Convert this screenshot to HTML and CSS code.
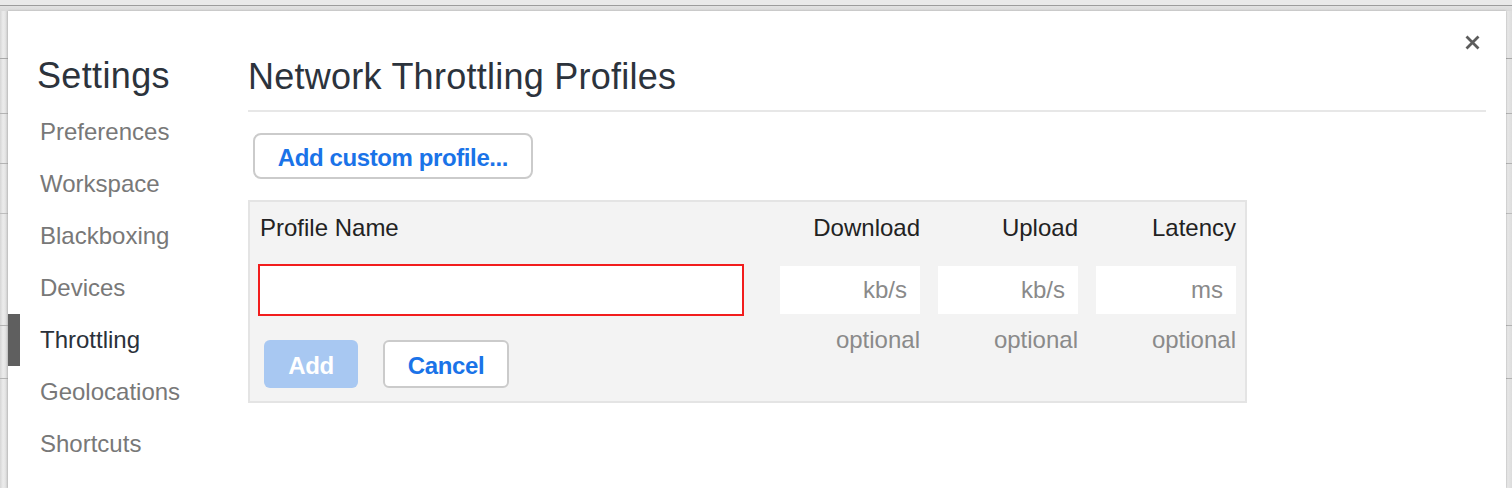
FILE: index.html
```html
<!DOCTYPE html>
<html lang="en">
<head>
<meta charset="utf-8">
<title>Settings - Throttling</title>
<link rel="stylesheet" href="styles.css">
</head>
<body>
<div class="dialog">
  <button class="close" aria-label="Close">
    <svg width="15" height="15" viewBox="0 0 15 15"><path d="M1.5 1.5 L13.5 13.5 M13.5 1.5 L1.5 13.5" stroke="#5c5c5c" stroke-width="2.8" stroke-linecap="butt" fill="none"/></svg>
  </button>
  <nav class="sidebar">
    <h1 class="sidebar-title">Settings</h1>
    <ul class="tabs">
      <li class="tab">Preferences</li>
      <li class="tab">Workspace</li>
      <li class="tab">Blackboxing</li>
      <li class="tab">Devices</li>
      <li class="tab selected">Throttling</li>
      <li class="tab">Geolocations</li>
      <li class="tab">Shortcuts</li>
    </ul>
  </nav>
  <main class="content">
    <h2 class="content-title">Network Throttling Profiles</h2>
    <button class="btn add-profile">Add custom profile...</button>
    <div class="editor">
      <div class="editor-grid">
        <div class="hdr hdr-left">Profile Name</div>
        <div class="hdr">Download</div>
        <div class="hdr">Upload</div>
        <div class="hdr">Latency</div>

        <div class="input-cell"><input class="name-input" type="text"></div>
        <div class="input-cell"><input class="num-input" type="text" placeholder="kb/s"></div>
        <div class="input-cell"><input class="num-input" type="text" placeholder="kb/s"></div>
        <div class="input-cell"><input class="num-input" type="text" placeholder="ms"></div>

        <div class="actions">
          <button class="btn btn-primary">Add</button>
          <button class="btn btn-cancel">Cancel</button>
        </div>
        <div class="hint">optional</div>
        <div class="hint">optional</div>
        <div class="hint">optional</div>
      </div>
    </div>
  </main>
</div>
</body>
</html>
```

FILE: styles.css
```css
html, body {
  margin: 0;
  padding: 0;
  height: 100%;
  overflow: hidden;
}

body {
  font-family: "Liberation Sans", Arial, sans-serif;
  background:
    linear-gradient(#a9a9a9, #a9a9a9) 0 58px / 100% 1px no-repeat,
    linear-gradient(#b3b3b3, #b3b3b3) 0 113px / 100% 1px no-repeat,
    linear-gradient(#b3b3b3, #b3b3b3) 0 163px / 100% 1px no-repeat,
    linear-gradient(#bdbdbd, #bdbdbd) 0 213px / 100% 1px no-repeat,
    linear-gradient(#b3b3b3, #b3b3b3) 0 325px / 100% 1px no-repeat,
    linear-gradient(#b3b3b3, #b3b3b3) 0 378px / 100% 1px no-repeat,
    linear-gradient(#e9e9e9 0, #e9e9e9 5px, #9c9c9c 5px, #9c9c9c 6px, #e2e2e2 6px, #d9d9d9 11px, transparent 11px),
    linear-gradient(90deg, #d6d6d6 0, #ececec 3px, #e6e6e6 5px, #cfcfcf 8px, #cfcfcf 1505px, #e8e8e8 1507px, #dcdcdc 1512px);
  padding-top: 11px;
  box-sizing: border-box;
}

.dialog {
  position: relative;
  margin-left: 8px;
  width: 1498px;
  height: 477px;
  background: #fff;
  box-shadow: 0 0 2px rgba(0, 0, 0, 0.22);
  display: flex;
}

.close {
  position: absolute;
  top: 24px;
  right: 26px;
  width: 15px;
  height: 15px;
  padding: 0;
  border: 0;
  background: transparent;
  display: flex;
}

/* Sidebar */
.sidebar {
  width: 240px;
  flex: none;
  padding-top: 45px;
  box-sizing: border-box;
}

.sidebar-title {
  margin: 0 0 10px 0;
  padding-left: 29px;
  font-size: 36px;
  line-height: 40px;
  font-weight: normal;
  letter-spacing: 0.35px;
  color: #2c333c;
}

.tabs {
  list-style: none;
  margin: 0;
  padding: 0;
}

.tab {
  height: 52px;
  line-height: 52px;
  font-size: 24px;
  padding-left: 32px;
  color: #787878;
  box-sizing: border-box;
}

.tab.selected {
  border-left: 12px solid #5f5f5f;
  padding-left: 20px;
  color: #2a313a;
}

/* Content */
.content {
  flex: 1;
  padding: 45px 20px 0 0;
  box-sizing: border-box;
}

.content-title {
  margin: 0;
  font-size: 36px;
  line-height: 42px;
  font-weight: normal;
  letter-spacing: 0.25px;
  color: #2c333c;
  padding-bottom: 12px;
  border-bottom: 2px solid #e7e7e7;
}

.btn {
  font-family: "Liberation Sans", Arial, sans-serif;
  font-size: 24px;
  font-weight: bold;
  letter-spacing: -0.4px;
  box-sizing: border-box;
  cursor: pointer;
  padding: 3px 0 0 0;
}

.add-profile {
  display: block;
  margin: 21px 0 0 5px;
  width: 280px;
  height: 46px;
  border: 2px solid #cbcbcb;
  border-radius: 8px;
  background: #fff;
  color: #1a73e8;
}

.editor {
  margin-top: 21px;
  width: 999px;
  box-sizing: border-box;
  border: 2px solid #e4e4e4;
  background: #f3f3f3;
  padding: 0 9px 13px 8px;
}

.editor-grid {
  display: grid;
  grid-template-columns: 504px 140px 140px 140px;
  column-gap: 18px;
}

.hdr {
  height: 52px;
  line-height: 52px;
  font-size: 24px;
  color: #222;
  text-align: right;
}

.hdr-left {
  text-align: left;
  padding-left: 2px;
}

.input-cell {
  margin-top: 10px;
  height: 52px;
  display: flex;
  align-items: center;
}

.name-input {
  width: 486px;
  height: 52px;
  box-sizing: border-box;
  border: 2px solid #f21d1d;
  background: #fff;
  outline: none;
  margin: 0;
  font-family: "Liberation Sans", Arial, sans-serif;
  font-size: 24px;
  padding: 0 10px;
}

.num-input {
  width: 140px;
  height: 48px;
  box-sizing: border-box;
  border: 0;
  background: #fff;
  outline: none;
  margin: 0;
  padding: 0 13px 0 8px;
  text-align: right;
  font-family: "Liberation Sans", Arial, sans-serif;
  font-size: 24px;
  color: #333;
}

.num-input::placeholder {
  color: #8a8a8a;
  opacity: 1;
}

.actions {
  margin-top: 24px;
  padding-left: 6px;
  display: flex;
  gap: 25px;
}

.btn-primary {
  width: 94px;
  height: 48px;
  border: 0;
  border-radius: 6px;
  background: #a8c8f2;
  color: #fff;
}

.btn-cancel {
  width: 126px;
  height: 48px;
  border: 2px solid #cbcbcb;
  border-radius: 6px;
  background: #fff;
  color: #1a73e8;
}

.hint {
  margin-top: 10px;
  line-height: 28px;
  font-size: 24px;
  color: #8a8a8a;
  text-align: right;
}
```
